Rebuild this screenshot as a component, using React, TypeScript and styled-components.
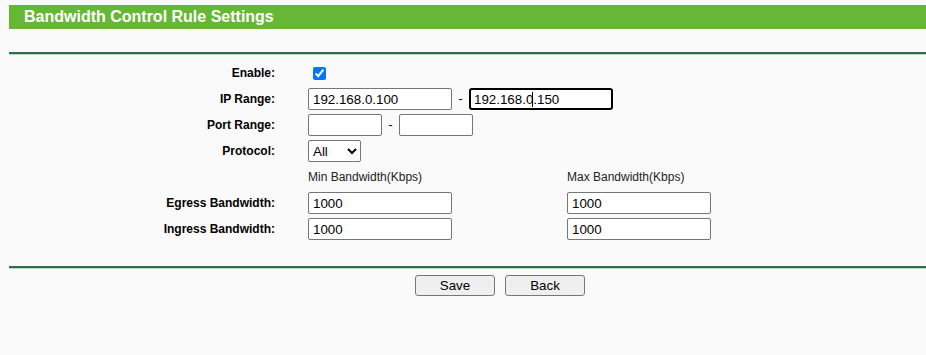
import React from "react";
import styled, { createGlobalStyle } from "styled-components";

const GlobalStyle = createGlobalStyle`
  body {
    margin: 0;
    background: #fafafa;
    font-family: "Liberation Sans", Arial, sans-serif;
  }
`;

function App() {
  return (
    <Page>
      <GlobalStyle />
      <Title>Bandwidth Control Rule Settings</Title>
      <Divider className="top" />
      <Form>
        <Label>Enable:</Label>
        <Cell>
          <Check type="checkbox" defaultChecked />
        </Cell>

        <Label>IP Range:</Label>
        <Cell>
          <Field defaultValue="192.168.0.100" />
          <Dash>-</Dash>
          <CaretWrap>
            <Field defaultValue="192.168.0.150" $focused />
            <Caret />
          </CaretWrap>
        </Cell>

        <Label>Port Range:</Label>
        <Cell>
          <Field $small />
          <Dash>-</Dash>
          <Field $small />
        </Cell>

        <Label>Protocol:</Label>
        <Cell>
          <Select defaultValue="all">
            <option value="all">All</option>
            <option value="tcp">TCP</option>
            <option value="udp">UDP</option>
          </Select>
        </Cell>

        <Label />
        <Cell className="pair">
          <Caption>Min Bandwidth(Kbps)</Caption>
          <Caption>Max Bandwidth(Kbps)</Caption>
        </Cell>

        <Label>Egress Bandwidth:</Label>
        <Cell className="pair">
          <Field defaultValue="1000" />
          <Field defaultValue="1000" />
        </Cell>

        <Label>Ingress Bandwidth:</Label>
        <Cell className="pair">
          <Field defaultValue="1000" />
          <Field defaultValue="1000" />
        </Cell>
      </Form>
      <Divider className="bottom" />
      <Buttons>
        <Button>Save</Button>
        <Button>Back</Button>
      </Buttons>
    </Page>
  );
}

const Page = styled.div`
  padding: 5px 0 0 9px;
  height: 350px;
`;

const Title = styled.h1`
  margin: 0;
  height: 24px;
  line-height: 24px;
  padding-left: 15px;
  background: #66b733;
  color: #fff;
  font-size: 16px;
  font-weight: bold;
`;

const Divider = styled.div`
  height: 2px;
  background: #2f6f4c;
  border-bottom: 1px solid #b7d8c2;
  &.top {
    margin-top: 23px;
  }
  &.bottom {
    margin-top: 26px;
  }
`;

const Form = styled.div`
  display: grid;
  grid-template-columns: 266px 1fr;
  grid-auto-rows: 22px;
  column-gap: 33px;
  row-gap: 4px;
  margin-top: 7px;
`;

const Label = styled.div`
  display: flex;
  align-items: center;
  justify-content: flex-end;
  font-size: 12px;
  font-weight: bold;
  color: #000;
`;

const Cell = styled.div`
  display: flex;
  align-items: center;
  &.pair {
    gap: 115px;
  }
`;

const Check = styled.input`
  width: 13px;
  height: 13px;
  margin: 0 0 0 5px;
  accent-color: #0075ff;
`;

const Field = styled.input<{ $small?: boolean; $focused?: boolean }>`
  box-sizing: border-box;
  width: ${(p) => (p.$small ? "74px" : "144px")};
  height: 22px;
  padding: 1px 4px;
  font-family: "Liberation Sans", Arial, sans-serif;
  font-size: 13.33px;
  color: #000;
  background: #fff;
  border: ${(p) => (p.$focused ? "2px solid #000" : "1px solid #767676")};
  border-radius: ${(p) => (p.$focused ? "3px" : "2px")};
  padding-left: ${(p) => (p.$focused ? "3px" : "4px")};
  outline: none;
`;

const CaretWrap = styled.span`
  position: relative;
  display: inline-flex;
`;

const Caret = styled.span`
  position: absolute;
  left: 63px;
  top: 4px;
  width: 1px;
  height: 15px;
  background: #000;
`;

const Dash = styled.span`
  width: 5px;
  margin: 0 6px;
  font-size: 12px;
  text-align: center;
  color: #000;
`;

const Select = styled.select`
  box-sizing: border-box;
  width: 53px;
  height: 22px;
  font-family: "Liberation Sans", Arial, sans-serif;
  font-size: 13.33px;
  color: #000;
  background: #fff;
  border: 1px solid #767676;
  border-radius: 2px;
`;

const Caption = styled.span`
  width: 144px;
  font-size: 12px;
  color: #222;
`;

const Buttons = styled.div`
  display: flex;
  gap: 10px;
  padding-left: 406px;
  margin-top: 6px;
`;

const Button = styled.button`
  width: 80px;
  height: 21px;
  padding: 0;
  font-family: "Liberation Sans", Arial, sans-serif;
  font-size: 13.33px;
  color: #000;
  background: #efefef;
  border: 1px solid #767676;
  border-radius: 3px;
`;

export default App;
